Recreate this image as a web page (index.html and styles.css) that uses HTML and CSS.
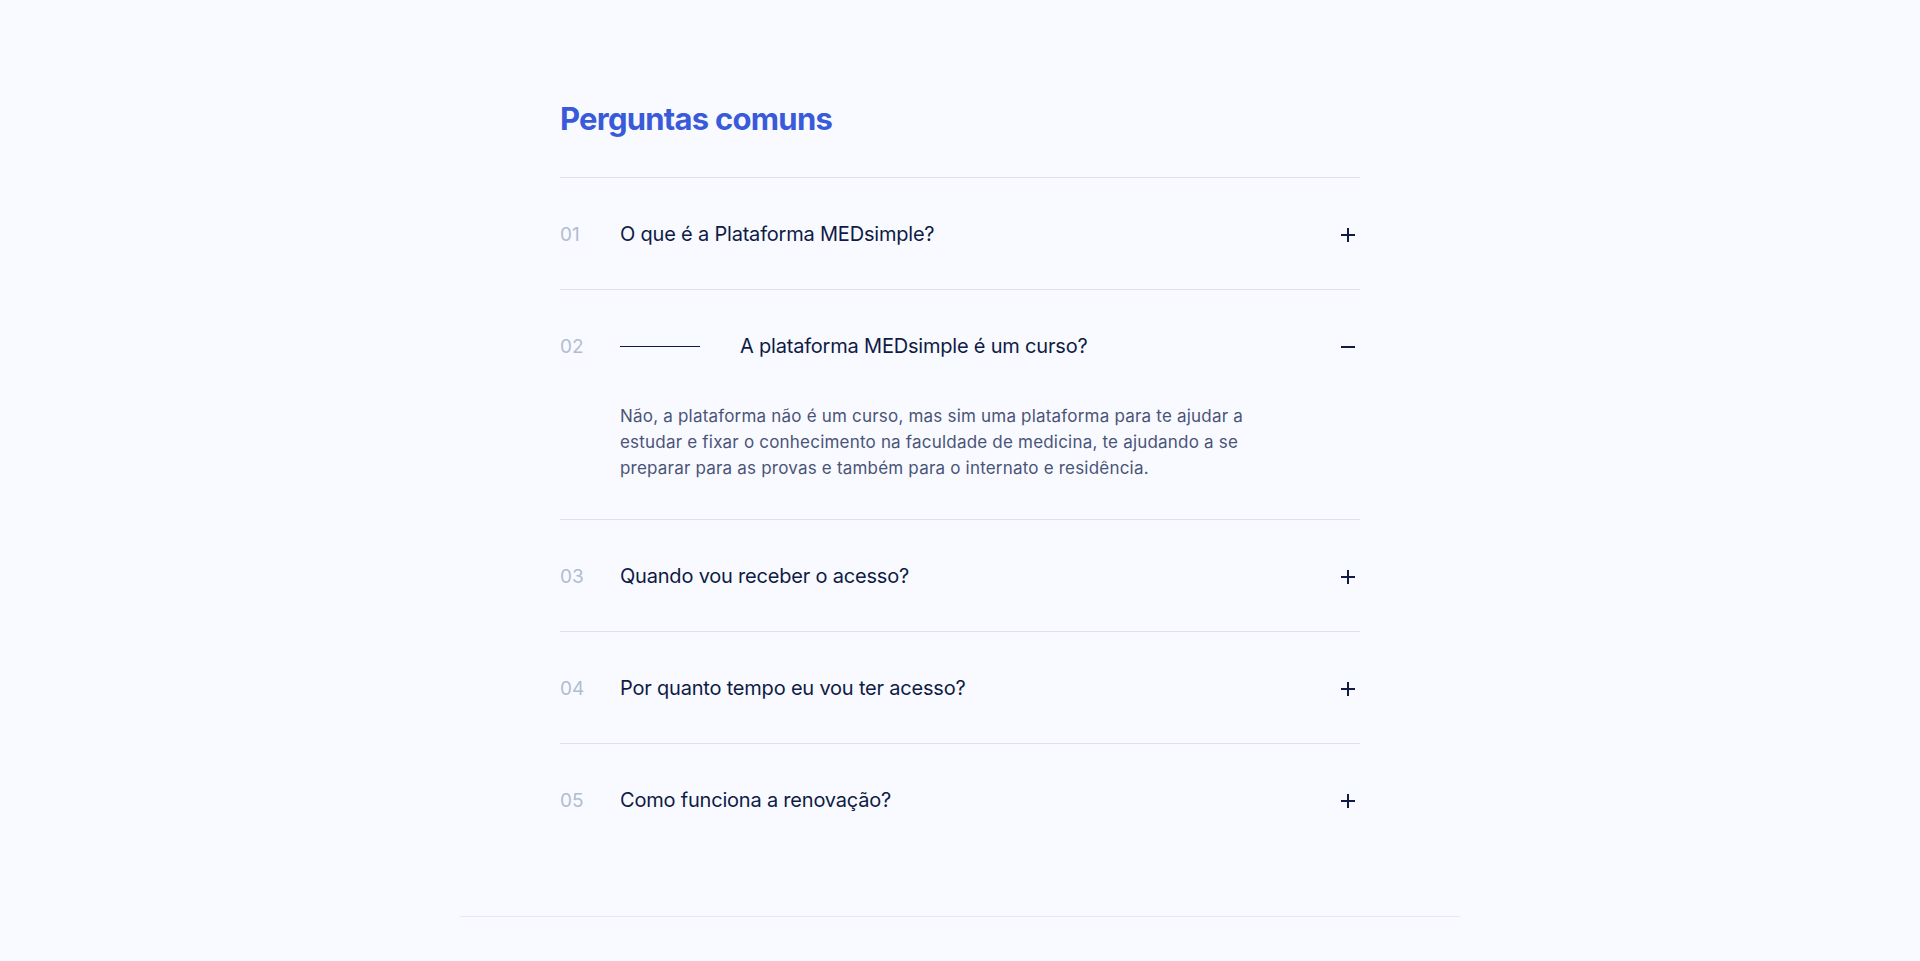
FILE: index.html
```html
<!DOCTYPE html>
<html lang="pt-BR">
<head>
<meta charset="utf-8">
<title>Perguntas comuns</title>
<link rel="stylesheet" href="styles.css">
</head>
<body>
<section class="faq">
  <h2 class="faq-title">Perguntas comuns</h2>
  <div class="faq-list">
    <div class="faq-item">
      <div class="faq-head">
        <span class="faq-num">01</span>
        <span class="faq-q">O que é a Plataforma MEDsimple?</span>
        <svg class="faq-icon" viewBox="0 0 24 24"><path d="M5 12h14M12 5v14"/></svg>
      </div>
    </div>
    <div class="faq-item is-open">
      <div class="faq-head">
        <span class="faq-num">02</span>
        <span class="faq-dash"></span>
        <span class="faq-q">A plataforma MEDsimple é um curso?</span>
        <svg class="faq-icon" viewBox="0 0 24 24"><path d="M5 12h14"/></svg>
      </div>
      <div class="faq-body">
        <p>Não, a plataforma não é um curso, mas sim uma plataforma para te ajudar a estudar e fixar o conhecimento na faculdade de medicina, te ajudando a se preparar para as provas e também para o internato e residência.</p>
      </div>
    </div>
    <div class="faq-item">
      <div class="faq-head">
        <span class="faq-num">03</span>
        <span class="faq-q">Quando vou receber o acesso?</span>
        <svg class="faq-icon" viewBox="0 0 24 24"><path d="M5 12h14M12 5v14"/></svg>
      </div>
    </div>
    <div class="faq-item">
      <div class="faq-head">
        <span class="faq-num">04</span>
        <span class="faq-q">Por quanto tempo eu vou ter acesso?</span>
        <svg class="faq-icon" viewBox="0 0 24 24"><path d="M5 12h14M12 5v14"/></svg>
      </div>
    </div>
    <div class="faq-item">
      <div class="faq-head">
        <span class="faq-num">05</span>
        <span class="faq-q">Como funciona a renovação?</span>
        <svg class="faq-icon" viewBox="0 0 24 24"><path d="M5 12h14M12 5v14"/></svg>
      </div>
    </div>
  </div>
</section>
<footer class="page-foot"></footer>
</body>
</html>
```
FILE: styles.css
```css
html, body {
  margin: 0;
  padding: 0;
  background: #f8faff;
}
body {
  font-family: Inter, "Liberation Sans", sans-serif;
  color: #0f1b45;
  min-height: 961px;
}
.faq {
  width: 800px;
  margin: 0 auto;
  padding: 100px 0 61px;
}
.faq-title {
  margin: 0 0 39px;
  font-size: 31px;
  line-height: 38px;
  font-weight: 700;
  color: #3a5bd9;
  letter-spacing: -0.75px;
}
.faq-list {
  display: flex;
  flex-direction: column;
}
.faq-item {
  border-top: 1px solid #dde1ec;
}
.faq-head {
  display: flex;
  align-items: center;
  padding: 43px 0 41px;
  line-height: 27px;
}
.faq-num {
  width: 60px;
  flex: none;
  font-size: 19px;
  color: #b1bdd1;
}
.faq-dash {
  width: 80px;
  height: 1.5px;
  background: #0f1b45;
  margin-right: 40px;
  flex: none;
}
.faq-q {
  flex: 1;
  font-size: 20px;
  letter-spacing: -0.2px;
  color: #0f1b45;
}
.faq-icon {
  width: 24px;
  height: 24px;
  flex: none;
  fill: none;
  stroke: #0f1b45;
  stroke-width: 2;
}
.faq-body {
  padding: 2px 0 38px 60px;
}
.faq-body p {
  margin: 0;
  max-width: 640px;
  font-size: 17px;
  letter-spacing: 0.2px;
  line-height: 26px;
  color: #4a5478;
}
.page-foot {
  width: 1000px;
  margin: 0 auto;
  border-top: 1px solid #e3e8f1;
}
```
